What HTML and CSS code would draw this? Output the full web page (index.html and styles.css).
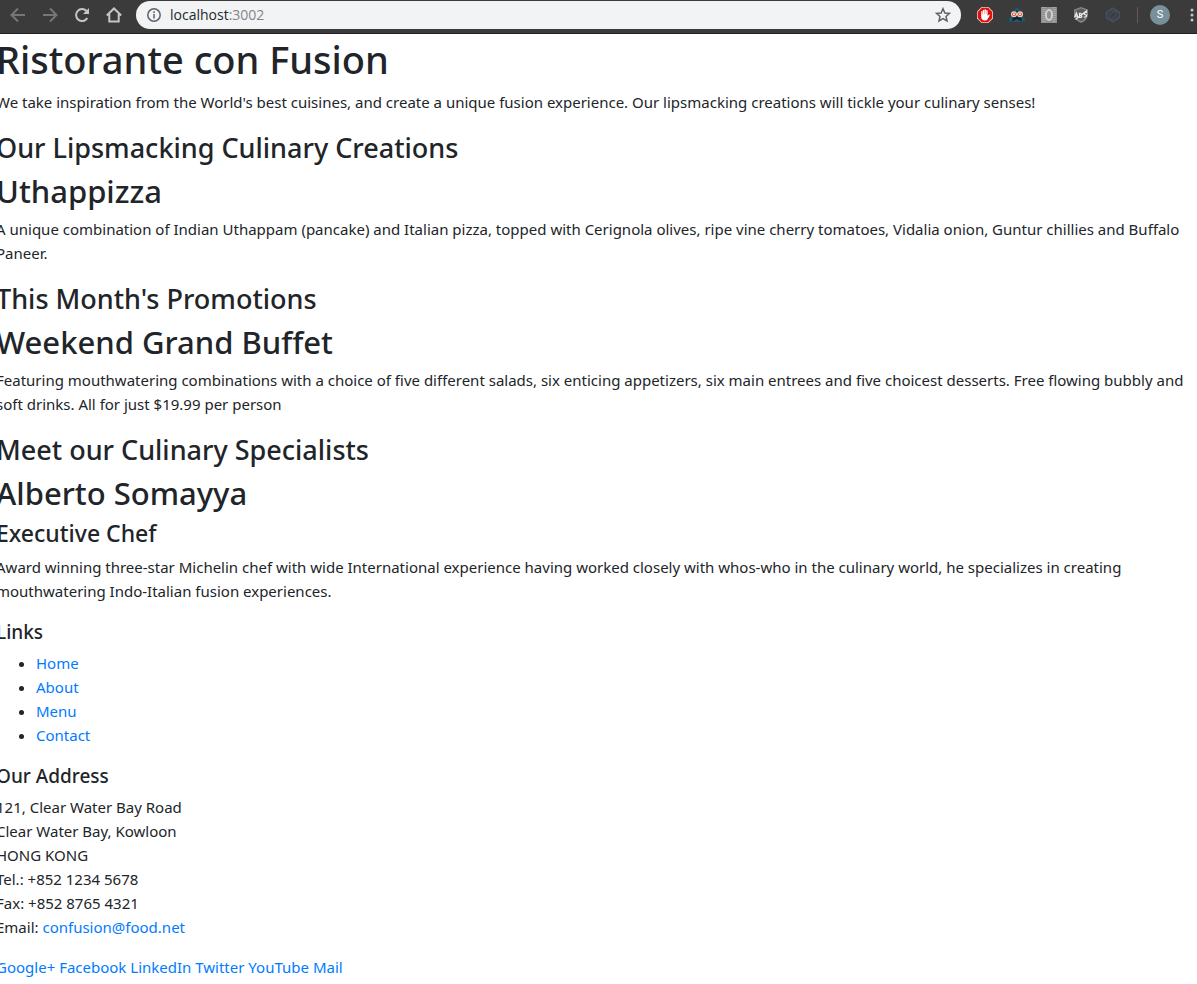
FILE: index.html
```
<!DOCTYPE html>
<html lang="en">
<head>
<meta charset="utf-8">
<title>Ristorante con Fusion</title>
<link rel="stylesheet" href="styles.css">
</head>
<body>
<header class="toolbar">
  <nav class="nav-buttons" aria-label="Browser navigation">
    <button class="tool dim" type="button" aria-label="Back"><svg viewBox="0 0 16 16"><path d="M15 8H2M8 1.500L1.500 8L8 14.500"/></svg></button>
    <button class="tool dim" type="button" aria-label="Forward"><svg viewBox="0 0 16 16"><path d="M1 8H14M8 1.500L14.500 8L8 14.500"/></svg></button>
    <button class="tool" type="button" aria-label="Reload"><svg viewBox="0 0 16 16"><path d="M13.300 11A6 6 0 1 1 12.500 4"/><path class="solid" d="M15 1V7H9Z"/></svg></button>
    <button class="tool" type="button" aria-label="Home"><svg viewBox="0 0 16 16"><path d="M.8 8.500L8 1.500L15.200 8.500M3.300 7V14.500H12.700V7"/></svg></button>
  </nav>
  <div class="address-bar">
    <svg class="info" viewBox="0 0 16 16"><circle cx="8" cy="8" r="6.200"/><path d="M8 7V11.500M8 4.300V6"/></svg>
    <div class="url" role="textbox" aria-label="Address" tabindex="0">localhost<span class="port">:3002</span></div>
    <button class="tool star" type="button" aria-label="Bookmark"><svg viewBox="0 0 16 16"><path d="M8 1.700L9.900 6L14.500 6.400L11 9.500L12 14L8 11.600L4 14L5 9.500L1.500 6.400L6.100 6Z"/></svg></button>
  </div>
  <div class="extensions">
    <button class="tool" type="button" aria-label="Ad blocker"><svg class="art" viewBox="0 0 16 16"><path fill="#f3c6c4" d="M4.500 0H11.500L16 4.500V11.500L11.500 16H4.500L0 11.500V4.500Z"/><path fill="#d9130f" d="M4.900 .8H11.100L15.200 4.900V11.100L11.100 15.200H4.900L.8 11.100V4.900Z"/><path fill="#fff" d="M4.200 4.500Q4.800 3.600 5.500 4.500V7.500H5.800V3.300Q6.500 2.300 7.200 3.300V7H7.500V2.600Q8.200 1.700 8.900 2.600V7H9.200V3.500Q9.900 2.600 10.600 3.500V9L11.700 7.700Q12.900 7.300 12.700 8.500L10.400 12.500Q9.500 13.700 7.700 13.500Q4.400 13.200 4.200 10Z"/></svg></button>
    <button class="tool" type="button" aria-label="Hooded reader"><svg class="art" viewBox="0 0 16 16"><path fill="#1f5768" d="M8 .5L11.500 3L13.500 9L15.800 11V15H.2V11L2.500 9L4.500 3Z"/><path fill="#17212a" d="M4 5L8 4L12 5V10L13 14.500L8 12L3 14.500L4 10Z"/><circle cx="5" cy="7.300" r="3" fill="#f3d5c5"/><circle cx="11" cy="7.300" r="3" fill="#f3d5c5"/><circle cx="5" cy="7.300" r="1.900" fill="#d94a35"/><circle cx="11" cy="7.300" r="1.900" fill="#d94a35"/><circle cx="5" cy="7.300" r="1" fill="#fff"/><circle cx="11" cy="7.300" r="1" fill="#fff"/></svg></button>
    <button class="tool" type="button" aria-label="Counter"><svg class="art" viewBox="0 0 16 16"><path fill="#8f8f8f" d="M0 0H16V16H0Z"/><path stroke="#a5a5a5" stroke-dasharray="1 1" d="M2 0V16M4 0V16M12 0V16M14 0V16"/><ellipse cx="8" cy="8" rx="3" ry="5" fill="none" stroke="#cfcfcf" stroke-width="2"/></svg></button>
    <button class="tool" type="button" aria-label="Shield"><svg class="art" viewBox="0 0 16 16"><path fill="#858585" d="M8 0L15 2.500V8Q14.500 13 8 16Q1.500 13 1 8V2.500Z"/><path fill="#5c5c5c" d="M8 1.500L13.500 3.500V8Q13 12 8 14.300Q3 12 2.500 8V3.500Z"/><path fill="none" stroke="#eee" stroke-width="1.200" d="M1.500 10.500L3.500 6L4.800 10.500M2 9.200H5M6.500 6V10.500H8Q9.800 9.800 8 8.200Q9.500 6.500 6.500 6M14 5.500Q10.800 5 11.300 7.300L13.500 8.200Q13.800 10.500 10.800 10M2.500 12.500L14 3.500"/></svg></button>
    <button class="tool" type="button" aria-label="Spiral"><svg class="art" viewBox="0 0 16 16"><g fill="none" stroke="#43515f" stroke-width="1.200"><rect x="1.500" y="4" width="10" height="7" rx="3" transform="rotate(-45 6.500 7.500)"/><rect x="4.500" y="5" width="10" height="7" rx="3" transform="rotate(-45 9.500 8.500)"/><path d="M5 2.500L8 1L14.500 5V11L8 15L1.500 11V5Z"/></g></svg></button>
    <span class="divider"></span>
    <button class="avatar" type="button" aria-label="Profile">S</button>
    <button class="tool more" type="button" aria-label="More"><svg class="art" viewBox="0 0 16 16"><g fill="#c5c6c7"><circle cx="8" cy="3" r="1.500"/><circle cx="8" cy="8" r="1.500"/><circle cx="8" cy="13" r="1.500"/></g></svg></button>
  </div>
</header>
<main class="page">
  <h1>Ristorante con Fusion</h1>
  <p>We take inspiration from the World's best cuisines, and create a unique fusion experience. Our lipsmacking creations will tickle your culinary senses!</p>
  <h3>Our Lipsmacking Culinary Creations</h3>
  <h2>Uthappizza</h2>
  <p>A unique combination of Indian Uthappam (pancake) and Italian pizza, topped with Cerignola olives, ripe vine cherry tomatoes, Vidalia onion, Guntur chillies and Buffalo Paneer.</p>
  <h3>This Month's Promotions</h3>
  <h2>Weekend Grand Buffet</h2>
  <p>Featuring mouthwatering combinations with a choice of five different salads, six enticing appetizers, six main entrees and five choicest desserts. Free flowing bubbly and soft drinks. All for just $19.99 per person</p>
  <h3>Meet our Culinary Specialists</h3>
  <h2>Alberto Somayya</h2>
  <h4>Executive Chef</h4>
  <p>Award winning three-star Michelin chef with wide International experience having worked closely with whos-who in the culinary world, he specializes in creating mouthwatering Indo-Italian fusion experiences.</p>
  <footer>
    <h5>Links</h5>
    <ul>
      <li><a href="#home">Home</a></li>
      <li><a href="#about">About</a></li>
      <li><a href="#menu">Menu</a></li>
      <li><a href="#contact">Contact</a></li>
    </ul>
    <h5>Our Address</h5>
    <address>121, Clear Water Bay Road<br>Clear Water Bay, Kowloon<br>HONG KONG<br>Tel.: +852 1234 5678<br>Fax: +852 8765 4321<br>Email: <a href="mailto:confusion@food.net">confusion@food.net</a></address>
    <div class="social"><a href="#google">Google+</a> <a href="#facebook">Facebook</a> <a href="#linkedin">LinkedIn</a> <a href="#twitter">Twitter</a> <a href="#youtube">YouTube</a> <a href="#mail">Mail</a></div>
  </footer>
</main>
</body>
</html>
```
FILE: styles.css
```
* { box-sizing: border-box; }
body { margin: 0; background: #fff; color: #212529; font: 400 15px/24px "Noto Sans", "Open Sans", sans-serif; overflow-x: hidden; }
.toolbar { display: flex; align-items: center; height: 34px; padding: 0 0 4px 10px; background: #3b3b3b; border-bottom: 1px solid #241f24; overflow: hidden; }
.nav-buttons { display: flex; gap: 16px; }
.tool { display: block; width: 16px; height: 16px; padding: 0; border: 0; background: none; color: #c5c6c7; flex: none; }
.tool svg, .info { display: block; width: 16px; height: 16px; fill: none; stroke: currentColor; stroke-width: 2; }
.tool .solid { fill: currentColor; stroke: none; }
.tool .art { stroke: none; }
.tool.dim { color: #767676; }
.address-bar { display: flex; align-items: center; flex: 1; height: 28px; margin-left: 14px; padding: 0 10px; border-radius: 14px; background: #f1f3f4; color: #5f6368; }
.tool.star { color: #5f6368; }
.info, .star svg { stroke-width: 1.500; }
.url { flex: 1; margin-left: 8px; font-family: "Open Sans", sans-serif; font-size: 14px; line-height: 20px; color: #24282c; }
.port { color: #80868b; }
.extensions { display: flex; align-items: center; gap: 16px; margin-left: 16px; }
.divider { width: 1px; height: 16px; background: #5d5d5d; }
.avatar { width: 20px; height: 20px; margin: 0 -2px 0 -4px; padding: 0; border: 0; border-radius: 50%; background: #78909c; color: #fff; font: 11px/20px Roboto, sans-serif; }
.more { margin-right: -3px; }
.page { margin-left: -4px; padding-top: 1px; }
h1, h2, h3, h4, h5 { margin: 0 0 7px; font-weight: 500; }
h1 { font-size: 38px; line-height: 48px; }
h2 { font-size: 31px; line-height: 38px; }
h3 { font-size: 27px; line-height: 34px; }
h4 { font-size: 23px; line-height: 29px; }
h5 { font-size: 19px; line-height: 24px; }
p, ul { margin: 0 0 17px; }
ul { padding-left: 40px; }
address { margin: 0 0 16px; font-style: normal; }
a { color: #007bff; text-decoration: none; }
```
